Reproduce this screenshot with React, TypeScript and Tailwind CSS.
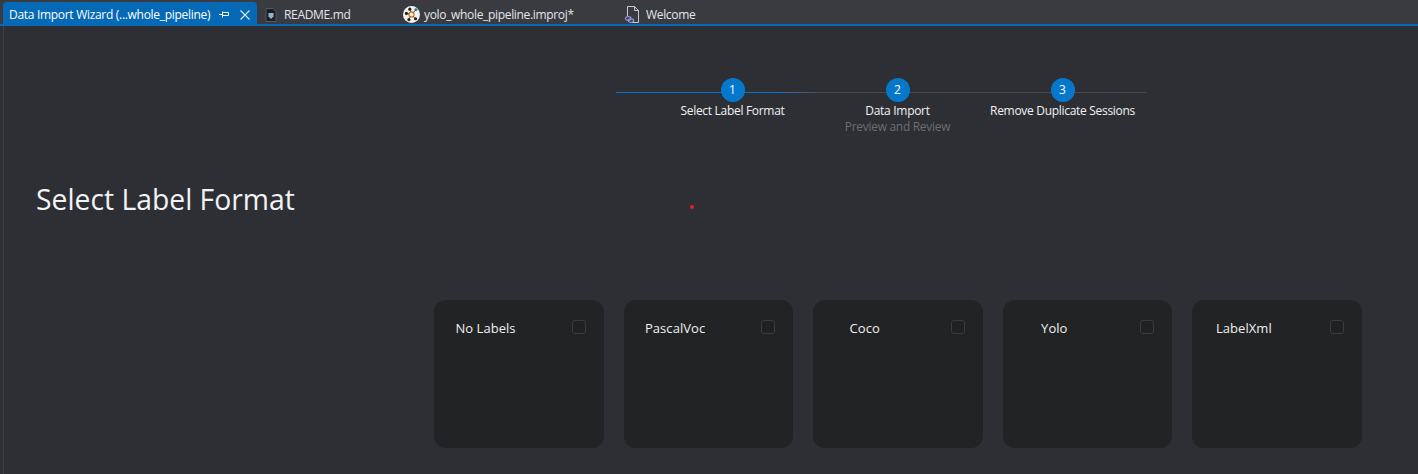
import React from "react";

function Step({ n, label, sub }: { n: number; label: string; sub?: string }) {
  return (
    <div className="flex w-[165px] flex-col items-center">
      <div className="z-10 flex h-6 w-6 items-center justify-center rounded-full bg-[#0678cc] text-[12px] leading-none text-white">
        {n}
      </div>
      <div className="mt-px whitespace-nowrap text-[12px] leading-[16px] tracking-[-0.3px] text-[#f2f2f2]">{label}</div>
      {sub && <div className="whitespace-nowrap text-[12px] leading-[16px] tracking-[-0.3px] text-[#6b6d72]">{sub}</div>}
    </div>
  );
}

function Card({ label }: { label: string }) {
  return (
    <div className="flex h-[148px] items-start justify-between rounded-[12px] bg-[#222325] pt-[19px] pr-[18px]">
      <div className="w-[103px] text-center text-[13px] leading-[18px] tracking-[0.05px] text-[#f0f0f0]">{label}</div>
      <div className="mt-px h-[14px] w-[14px] rounded-[3px] border border-[#3a3b3e] bg-[#202123]" />
    </div>
  );
}

function Tab({ children, w }: { children: React.ReactNode; w: string }) {
  return <div className={`flex h-6 items-center pt-[5px] text-[12px] tracking-[-0.33px] text-[#e4e6ea] ${w}`}>{children}</div>;
}

export default function App() {
  return (
    <div className="flex h-[474px] w-[1418px] flex-col overflow-hidden bg-[#2e2f34] font-['Open_Sans','Noto_Sans',sans-serif]">
      <div className="flex h-6 shrink-0 items-end bg-[#393b40] pl-[3px]">
        <div className="flex h-[22px] w-[254px] items-center rounded-t-[4px] bg-[#0669b6] pl-[6px] pt-[3px] text-[12px] tracking-[-0.3px] text-white">
          <span className="w-[201px] whitespace-nowrap">Data Import Wizard (...whole_pipeline)</span>
          <svg width="12" height="12" viewBox="0 0 12 12" fill="none" stroke="#f4f8fc" strokeWidth="1" className="ml-[8px]">
            <path d="M1 5.5h3M4.5 2.5v6M4.5 3.5h6v3h-6" />
          </svg>
          <svg width="12" height="12" viewBox="0 0 12 12" fill="none" stroke="#dbe9f5" strokeWidth="1.1" className="ml-[9px]">
            <path d="M1.5 1.5l9 9M10.5 1.5l-9 9" />
          </svg>
        </div>
        <Tab w="w-[146px]">
          <svg width="12" height="14" viewBox="0 0 12 14" className="ml-[8px] mr-[7px]">
            <path d="M1 0.5h7l3 3v10H1z" fill="#1d1f22" stroke="#55585d" />
            <path d="M3.5 5h5v3.5L6 11 3.5 8.5z" fill="#8fb4cf" />
          </svg>
          README.md
        </Tab>
        <Tab w="w-[222px]">
          <svg width="17" height="17" viewBox="0 0 16 16" className="mr-[4px]">
            <circle cx="8" cy="8" r="8" fill="#f2f2f2" />
            <circle cx="8" cy="8" r="2.4" fill="none" stroke="#e2841a" strokeWidth="1.3" />
            <circle cx="3.2" cy="7" r="1.5" fill="#222" />
            <circle cx="5.6" cy="12.8" r="1.5" fill="#222" />
            <circle cx="11.8" cy="12" r="1.5" fill="#222" />
            <circle cx="6.4" cy="3" r="1.5" fill="#222" />
            <circle cx="12.2" cy="3.4" r="1.6" fill="#2aa5a0" />
            <path d="M5.8 7.5L3.2 7M6.8 10L5.6 12.8M9.6 9.8l2.2 2.2M7.6 5.6L6.4 3M9.6 6.3l2.6-2.9" stroke="#222" strokeWidth="0.7" />
          </svg>
          yolo_whole_pipeline.improj*
        </Tab>
        <Tab w="flex-1">
          <svg width="15" height="17" viewBox="0 0 15 17" className="mr-[6px]" fill="none">
            <path d="M2.5 10V0.5h7l4 4v12H7" stroke="#c8cacd" />
            <path d="M9.5 0.5v4h4" stroke="#c8cacd" />
            <ellipse cx="3.2" cy="12.5" rx="2.7" ry="1.8" stroke="#a58ae0" strokeWidth="1.2" />
            <ellipse cx="6" cy="14.6" rx="2.7" ry="1.8" stroke="#7fa8e0" strokeWidth="1.2" />
          </svg>
          Welcome
        </Tab>
      </div>
      <div className="h-[2px] shrink-0 bg-[#0669b6]" />
      <div className="ml-[3px] flex flex-1 flex-col border-l border-[#3d3f44]">
        <div className="relative ml-[646px] mt-[52px] flex w-[495px]">
          <div className="absolute left-[-34px] top-[14px] h-px w-[530px] bg-gradient-to-r from-[#0678cc] from-[31%] to-[#4a4c50] to-[38%]" />
          <Step n={1} label="Select Label Format" />
          <Step n={2} label="Data Import" sub="Preview and Review" />
          <Step n={3} label="Remove Duplicate Sessions" />
        </div>
        <div className="relative">
          <h1 className="ml-[32px] mt-[45px] text-[28.3px] leading-[38px] text-[#f2f3f5]">Select Label Format</h1>
          <div className="absolute left-[686px] top-[70px] h-1 w-1 rounded-full bg-[#ea1c24]" />
        </div>
        <div className="ml-[430px] mt-[82px] grid w-[928px] grid-cols-5 gap-5">
          <Card label="No Labels" />
          <Card label="PascalVoc" />
          <Card label="Coco" />
          <Card label="Yolo" />
          <Card label="LabelXml" />
        </div>
      </div>
    </div>
  );
}
